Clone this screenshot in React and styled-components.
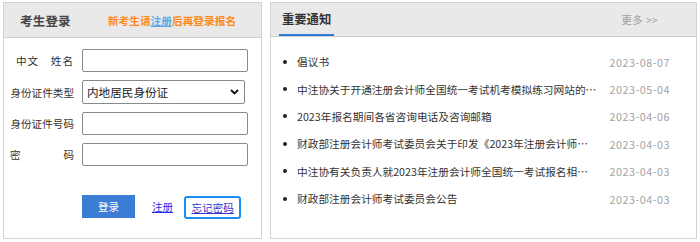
import React from 'react';
import styled, { createGlobalStyle } from 'styled-components';

const Global = createGlobalStyle`
  html, body { margin: 0; padding: 0; background: #fff; }
  body {
    font-family: "Noto Sans CJK SC", "Noto Sans", sans-serif;
    color: #333;
    font-size: 10.6px;
  }
  * { box-sizing: border-box; }
`;

const Page = styled.div`
  display: flex;
  align-items: flex-start;
  gap: 8px;
  padding: 2px 0 0 3px;
`;

const Panel = styled.section`
  width: ${p => p.$w}px;
  height: 237px;
  border: 1px solid #d3d3d3;
  background: #fff;
  display: flex;
  flex-direction: column;
`;

const Header = styled.header`
  height: ${p => p.$h}px;
  flex: none;
  background: #e9e9e9;
  border-bottom: 1px solid #cfcfcf;
  display: flex;
  align-items: ${p => (p.$stretch ? 'stretch' : 'center')};
  padding: ${p => p.$pad};
`;

const LoginTitle = styled.h2`
  margin: 0;
  font-size: 12.5px;
  font-weight: 700;
  color: #444;
  letter-spacing: 0.2px;
`;

const Notice = styled.p`
  margin: 0 0 0 37px;
  font-size: 10.7px;
  font-weight: 700;
  color: #ff8a1c;
`;

const NoticeLink = styled.a`
  color: #5aa8e8;
  text-decoration: underline;
`;

const Form = styled.form`
  display: flex;
  flex-direction: column;
  gap: 8px;
  padding: 11px 0 0 6px;
`;

const Row = styled.div`
  display: flex;
  align-items: center;
  gap: 8px;
  height: ${p => p.$h || 23}px;
`;

const Label = styled.label`
  width: 64px;
  flex: none;
  font-size: 10.6px;
  color: #333;
  white-space: pre;
  text-align: ${p => (p.$justify ? 'justify' : 'right')};
  text-align-last: ${p => (p.$justify ? 'justify' : 'right')};
  letter-spacing: ${p => p.$spacing || 0}px;
`;

const Input = styled.input`
  width: 166px;
  height: 23px;
  border: 1px solid #8a8a8a;
  border-radius: 2px;
  padding: 0 4px;
  font: inherit;
  background: #fff;
`;

const SelectBox = styled.div`
  width: 163px;
  height: 24px;
  border: 1px solid #8a8a8a;
  border-radius: 2px;
  display: flex;
  align-items: center;
  padding-right: 5px;
  background: #fff;
`;

const Select = styled.select`
  flex: 1;
  min-width: 0;
  height: 100%;
  appearance: none;
  -webkit-appearance: none;
  border: none;
  outline: none;
  background: transparent;
  padding: 0 0 0 4px;
  font-family: inherit;
  font-size: 11.6px;
  color: #222;
`;

const Actions = styled.div`
  display: flex;
  align-items: center;
  margin-top: 19px;
  padding-left: 72px;
`;

const LoginButton = styled.button`
  width: 53px;
  height: 23px;
  border: none;
  background: #3b7dd4;
  color: #fff;
  font: inherit;
  font-size: 10.6px;
  padding: 0;
`;

const TextLink = styled.a`
  color: ${p => p.$color};
  text-decoration: underline;
  font-size: 10.6px;
  margin-left: ${p => p.$ml}px;
`;

const FocusBox = styled.span`
  margin-left: 11px;
  width: 57px;
  height: 23px;
  margin-top: 3px;
  border: 2px solid #1b8cf6;
  border-radius: 3px;
  display: flex;
  align-items: center;
  justify-content: center;
`;

const Tab = styled.div`
  display: flex;
  align-items: center;
  padding: 1px 3px 0;
  margin-left: 8px;
  border-bottom: 2px solid #2e7cd8;
  font-size: 12.3px;
  font-weight: 700;
  color: #333;
`;

const More = styled.a`
  margin-left: auto;
  margin-right: 38px;
  align-self: center;
  font-size: 10.5px;
  color: #a0a0a0;
  text-decoration: none;
  letter-spacing: 0.3px;
`;

const List = styled.ul`
  list-style: none;
  margin: 0;
  padding: 11px 26px 0 12px;
`;

const Item = styled.li`
  display: flex;
  align-items: center;
  height: 27.4px;
`;

const Bullet = styled.span`
  width: 4px;
  height: 4px;
  border-radius: 50%;
  background: #222;
  flex: none;
  margin-right: 10px;
`;

const ItemTitle = styled.a`
  flex: 1;
  min-width: 0;
  overflow: hidden;
  white-space: nowrap;
  text-overflow: ellipsis;
  font-size: 10.7px;
  color: #333;
  text-decoration: none;
  margin-right: 11px;
`;

const ItemDate = styled.span`
  flex: none;
  white-space: nowrap;
  font-size: 10.8px;
  color: #a3a3a3;
  letter-spacing: 0.5px;
`;

const notices = [
  ['倡议书', '2023-08-07'],
  ['中注协关于开通注册会计师全国统一考试机考模拟练习网站的公告', '2023-05-04'],
  ['2023年报名期间各省咨询电话及咨询邮箱', '2023-04-06'],
  ['财政部注册会计师考试委员会关于印发《2023年注册会计师全国统一考试报名简章》的通知', '2023-04-03'],
  ['中注协有关负责人就2023年注册会计师全国统一考试报名相关问题答记者问', '2023-04-03'],
  ['财政部注册会计师考试委员会公告', '2023-04-03'],
];

export default function App() {
  return (
    <>
      <Global />
      <Page>
        <Panel $w={259}>
          <Header $h={35} $pad="0 0 0 16px">
            <LoginTitle>考生登录</LoginTitle>
            <Notice>
              新考生请<NoticeLink href="#">注册</NoticeLink>后再登录报名
            </Notice>
          </Header>
          <Form onSubmit={e => e.preventDefault()}>
            <Row>
              <Label $spacing={1}>{'中文\u3000姓名'}</Label>
              <Input type="text" />
            </Row>
            <Row $h={24}>
              <Label>身份证件类型</Label>
              <SelectBox>
                <Select defaultValue="1">
                  <option value="1">内地居民身份证</option>
                </Select>
                <svg width="9" height="6" viewBox="0 0 9 6">
                  <path d="M1 1 L4.5 4.5 L8 1" fill="none" stroke="#111" strokeWidth="1.8" />
                </svg>
              </SelectBox>
            </Row>
            <Row>
              <Label>身份证件号码</Label>
              <Input type="text" />
            </Row>
            <Row>
              <Label $justify>密码</Label>
              <Input type="password" />
            </Row>
            <Actions>
              <LoginButton type="submit">登录</LoginButton>
              <TextLink href="#" $color="#2a2ae8" $ml={17}>注册</TextLink>
              <FocusBox>
                <TextLink href="#" $color="#3434c8" $ml={0}>忘记密码</TextLink>
              </FocusBox>
            </Actions>
          </Form>
        </Panel>
        <Panel $w={427}>
          <Header $h={34} $stretch $pad="0">
            <Tab>重要通知</Tab>
            <More href="#">更多 &gt;&gt;</More>
          </Header>
          <List>
            {notices.map(([t, d], i) => (
              <Item key={i}>
                <Bullet />
                <ItemTitle href="#">{t}</ItemTitle>
                <ItemDate>{d}</ItemDate>
              </Item>
            ))}
          </List>
        </Panel>
      </Page>
    </>
  );
}
